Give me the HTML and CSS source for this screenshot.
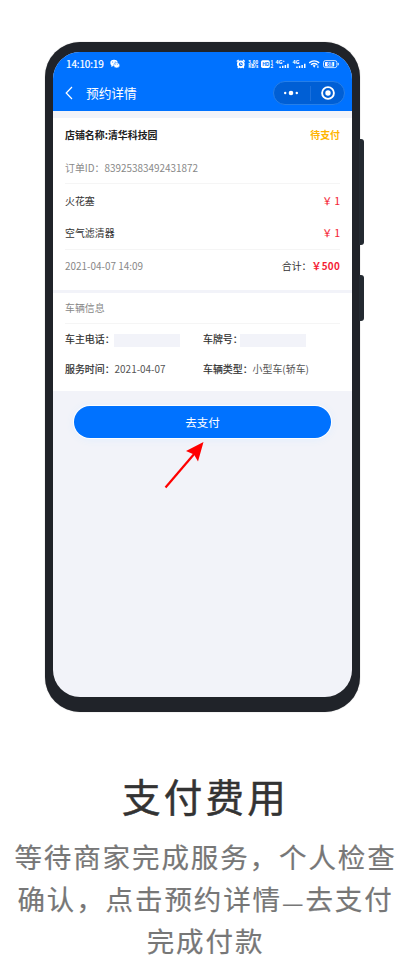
FILE: index.html
```html
<!DOCTYPE html>
<html lang="zh-CN">
<head>
<meta charset="utf-8">
<title>支付费用</title>
<link rel="stylesheet" href="styles.css">
</head>
<body>
<main class="page">
  <div class="phone">
    <i class="key volume"></i>
    <i class="key power"></i>
    <div class="screen">
      <header class="header">
        <div class="status">
          <span class="clock">14:10:19</span>
          <svg class="wechat" width="10" height="10" viewBox="0 0 10 10"><ellipse cx="4" cy="3.9" rx="3.7" ry="3.1" fill="#fff"/><path d="M1.5 6 1.3 8 3.5 6.8z" fill="#fff"/><ellipse cx="6.7" cy="6.3" rx="3" ry="2.6" fill="#fff" stroke="#0072ff" stroke-width=".5"/><g fill="#0072ff"><circle cx="2.7" cy="3" r=".5"/><circle cx="5.2" cy="3" r=".5"/><circle cx="5.8" cy="5.7" r=".4"/><circle cx="7.7" cy="5.7" r=".4"/></g></svg>
          <svg class="indicators" width="104" height="12" viewBox="0 0 104 12">
            <g fill="none" stroke="#fff">
              <circle cx="4.8" cy="6.3" r="2.9" stroke-width="1.9"/>
              <path d="M.8 3.6 2.7 2M8.8 3.6 6.9 2M2.8 9l-1 1M6.8 9l1 1" stroke-width="1.3"/>
              <path d="M4.7 4.7v1.8h1.5" stroke-width=".8"/>
              <path d="M73.2 4.9q5-4 10 0M75 6.7q3.2-2.5 6.4 0" stroke-width="1.4"/>
              <rect x="87.5" y="2.6" width="13.4" height="7" rx="2" stroke-width=".8"/>
              <path d="M102.2 4.9v2.4" stroke-width="1"/>
            </g>
            <g fill="#fff">
              <rect x="25" y="2.2" width="8.8" height="7.8" rx="1.7"/>
              <path d="M76.7 7.5q1.5-1 3 0l-1.5 2.3z"/>
              <path d="M81.4 7.5h1v2.4h-1z"/>
              <rect x="89" y="3.9" width="9.2" height="4.5" rx=".7"/>
              <path d="M43.4 8.4h1.5v1.6h-1.5zM46 7.7h1.5V10H46zM48.6 7h1.5v3h-1.5zM51.2 5.8h1.5V10h-1.5zM60.2 8.4h1.5v1.6h-1.5zM62.8 7.7h1.5V10h-1.5zM65.4 7h1.5v3h-1.5zM68 5.8h1.5V10H68z"/>
            </g>
            <g class="tiny">
              <text x="12.2" y="5.6" textLength="10">3.00</text>
              <text x="12.2" y="10" textLength="10">KB/s</text>
              <text x="34.4" y="5.6">1</text>
              <text x="34.4" y="10.3">2</text>
              <text class="net" x="39.5" y="6.1">4G⁺</text>
              <text class="net" x="56.5" y="6.1">4G</text>
              <text class="cut" x="26.2" y="8">HD</text>
              <text class="cut" x="91" y="8">68</text>
            </g>
          </svg>
        </div>
        <div class="nav">
          <svg class="back" width="8" height="14" viewBox="0 0 8 14"><path d="M7 1 1.2 7 7 13" fill="none" stroke="#fff" stroke-width="1.2"/></svg>
          <h1>预约详情</h1>
          <div class="capsule">
            <svg width="16" height="6" viewBox="0 0 16 6" fill="#fff"><circle cx="2.2" cy="3" r="1.2"/><circle cx="8" cy="3" r="2.3"/><circle cx="13.8" cy="3" r="1.2"/></svg>
            <i class="split"></i>
            <svg width="14" height="14" viewBox="0 0 14 14"><circle cx="7" cy="7" r="5.9" fill="none" stroke="#fff" stroke-width="1.9"/><circle cx="7" cy="7" r="2.7" fill="#fff"/></svg>
          </div>
        </div>
      </header>
      <section class="card order">
        <div class="row shop"><span>店铺名称:清华科技园</span><span class="state">待支付</span></div>
        <div class="row line muted">订单ID：83925383492431872</div>
        <div class="row"><span>火花塞</span><span class="price">￥ 1</span></div>
        <div class="row line"><span>空气滤清器</span><span class="price">￥ 1</span></div>
        <div class="row"><span class="muted">2021-04-07 14:09</span><span class="total">合计：<b>￥500</b></span></div>
      </section>
      <section class="card vehicle">
        <div class="row line muted">车辆信息</div>
        <div class="pair">
          <div><span>车主电话：</span><i class="mask"></i></div>
          <div><span>车牌号：</span><i class="mask plate"></i></div>
        </div>
        <div class="pair">
          <div><span>服务时间：</span><span class="value">2021-04-07</span></div>
          <div><span>车辆类型：</span><span class="value">小型车(轿车)</span></div>
        </div>
      </section>
      <button class="pay">去支付</button>
      <svg class="arrow" width="44" height="50" viewBox="0 0 44 50"><path d="M2.5 46.5 32 12" stroke="#f00" stroke-width="2.2"/><path d="M40.5 1 35 20.5 31 13.5 23 10z" fill="#f00"/></svg>
    </div>
  </div>
  <h2 class="caption">支付费用</h2>
  <p class="description">等待商家完成服务，个人检查<br>确认，点击预约详情<span class="dash">—</span>去支付<br>完成付款</p>
</main>
</body>
</html>
```
FILE: styles.css
```css
* { box-sizing: border-box; }
body {
  margin: 0;
  background: #fff;
  color: #333;
  font-family: "Noto Sans CJK SC", sans-serif;
}
h1, h2, p { margin: 0; }
.page { width: 411px; padding-top: 42px; }
.phone {
  position: relative;
  width: 315px;
  height: 670px;
  margin-left: 45px;
  padding: 10px 8px 15px;
  border-radius: 35px;
  background: #202329;
  box-shadow: 0 0 1px #888;
}
.key {
  position: absolute;
  left: 314px;
  width: 5px;
  border-radius: 0 3px 3px 0;
  background: #242a31;
}
.volume { top: 97px; height: 106px; }
.power { top: 233px; height: 46px; }
.screen {
  height: 645px;
  border-radius: 27px;
  overflow: hidden;
  background: #f2f3f9;
  font-size: 9.93px;
  line-height: 15px;
}
.header { height: 59px; background: #0072ff; color: #fff; }
.status { display: flex; align-items: center; height: 24px; padding-left: 13px; }
.clock {
  width: 39px;
  font: 400 10px/14px "Noto Sans CJK SC", sans-serif;
  letter-spacing: -.15px;
  -webkit-text-stroke: .2px #fff;
}
.wechat { margin-left: 5px; }
.indicators { margin-left: auto; margin-right: 12px; }
.tiny { fill: #fff; font: 700 4.5px "Noto Sans", sans-serif; }
.net { font-size: 5.4px; }
.cut { fill: #0072ff; font-size: 4.8px; }
.nav { display: flex; align-items: center; height: 34px; padding: 0 7px 0 12px; }
.nav h1 { margin-left: 13px; font-size: 12.7px; font-weight: 400; line-height: 18px; }
.capsule {
  display: flex;
  align-items: center;
  justify-content: space-between;
  width: 72px;
  height: 24px;
  margin-left: auto;
  padding: 0 9px 0 9px;
  border: 1px solid #267fe8;
  border-radius: 12px;
  background: #005fd5;
}
.split { width: 1px; height: 15px; background: #1b70dc; }
.card { padding: 0 12px; background: #fff; }
.order { height: 172px; margin-top: 7px; }
.vehicle { height: 98px; margin-top: 3px; }
.row { display: flex; align-items: center; justify-content: space-between; height: 33px; }
.line { border-bottom: 1px solid #f5f5f5; }
.shop, .state, .total b { font-weight: 700; }
.shop { color: #222; }
.state { color: #ffb400; }
.muted { color: #888; }
.price { color: #f51d35; -webkit-text-stroke: .15px #f51d35; }
.total { font-weight: 400; }
.total b { color: #f51d35; letter-spacing: .25px; }
.order .row:nth-child(n + 4) { height: 32.5px; }
.vehicle .row { height: 31px; padding-bottom: 1px; }
.pair { display: grid; grid-template-columns: 138px 1fr; height: 30px; align-items: center; -webkit-text-stroke: .2px #333; }
.pair:nth-child(n + 2) { padding-bottom: 1px; }
.pair div { display: flex; align-items: center; }
.mask { width: 66px; height: 13px; margin: 4px 0 0 -1px; background: #f2f3f9; }
.plate { margin-left: -3px; }
.value { color: #555; -webkit-text-stroke: 0; }
.pay {
  display: block;
  width: 257px;
  height: 32px;
  margin: 15px auto 0 21px;
  padding: 0;
  border: 0;
  border-radius: 16px;
  background: #0072ff;
  box-shadow: 0 0 1px 1px #fff, 0 1px 8px #dfedff;
  color: #fff;
  font: 400 11.5px/32px "Noto Sans CJK SC", sans-serif;
}
.arrow { display: block; margin: 3px 0 0 110px; }
.caption {
  margin-top: 54px;
  color: #333;
  font-size: 38.5px;
  font-weight: 400;
  line-height: 58px;
  letter-spacing: 3.2px;
  text-align: center;
  -webkit-text-stroke: .5px #333;
}
.description {
  margin-top: 11px;
  color: #777;
  font-size: 27.5px;
  line-height: 42px;
  letter-spacing: 1.9px;
  text-align: center;
  white-space: nowrap;
  height: 132px;
  overflow: hidden;
  -webkit-text-stroke: .2px #777;
}
.dash { display: inline-block; font-size: 24px; line-height: 20px; transform: translateY(2px); }
```
